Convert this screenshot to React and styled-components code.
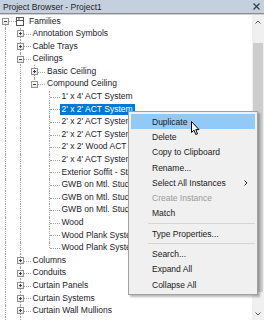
import React from "react";
import styled, { createGlobalStyle } from "styled-components";

const Global = createGlobalStyle`
  html, body { margin: 0; padding: 0; background: #fff; }
  body { font-family: "Liberation Sans", Arial, sans-serif; }
`;

const Window = styled.div`
  position: relative;
  width: 264px;
  height: 320px;
  overflow: hidden;
  display: flex;
  flex-direction: column;
  background: #fff;
  font-family: "Liberation Sans", Arial, sans-serif;
  font-size: 8.5px;
  color: #1c1c1c;
`;

const TitleBar = styled.div`
  height: 13px;
  flex: none;
  display: flex;
  align-items: center;
  justify-content: space-between;
  padding: 0 4px 0 3px;
  background: #c4d0de;
  color: #1e2228;
  border-bottom: 1px solid #8a8a8a;
  box-shadow: 0 1px 0 #d2d2d2;
  margin-bottom: 1px;
`;

const Body = styled.div`
  flex: 1;
  display: flex;
  min-height: 0;
`;

const Tree = styled.div`
  flex: 1;
  overflow: hidden;
  display: flex;
  flex-direction: column;
`;

const Row = styled.div`
  height: 12.6px;
  flex: none;
  display: flex;
  align-items: center;
  white-space: nowrap;
`;

const Filler = styled.div`
  flex: 1;
  display: flex;
`;

const Guide = styled.div`
  width: 14.5px;
  height: 100%;
  flex: none;
  position: relative;
  &::before {
    content: "";
    display: ${(p) => (p.$line ? "block" : "none")};
    position: absolute;
    left: 5px;
    top: 0;
    bottom: 0;
    border-left: 1px dotted #a3a3a3;
  }
`;

const Node = styled.div`
  width: 16px;
  height: 100%;
  flex: none;
  position: relative;
  display: flex;
  align-items: center;
  &::before {
    content: "";
    position: absolute;
    left: 5px;
    top: ${(p) => (p.$first ? "50%" : "0")};
    bottom: ${(p) => (p.$next ? "0" : "50%")};
    border-left: 1px dotted #a3a3a3;
  }
  &::after {
    content: "";
    position: absolute;
    left: 6px;
    right: 0;
    top: 50%;
    border-top: 1px dotted #a3a3a3;
  }
`;

const Toggle = styled.div`
  position: relative;
  z-index: 1;
  margin-left: 2px;
  width: 7px;
  height: 7px;
  box-sizing: border-box;
  border: 1px solid #929292;
  background: linear-gradient(#ffffff, #e6e6e6);
  display: flex;
  align-items: center;
  justify-content: center;
`;

const Sign = styled.div`
  position: relative;
  width: 3px;
  height: 1px;
  background: #404040;
  &::after {
    content: "";
    display: ${(p) => (p.$plus ? "block" : "none")};
    position: absolute;
    left: 1px;
    top: -1px;
    width: 1px;
    height: 3px;
    background: #404040;
  }
`;

const Label = styled.span`
  height: 11.6px;
  line-height: 11.6px;
  padding: 0 2px;
  background: ${(p) => (p.$sel ? "#0078d7" : "transparent")};
  color: ${(p) => (p.$sel ? "#ffffff" : "#1c1c2a")};
`;

const FamIcon = styled.svg`
  flex: none;
  margin-right: 3px;
  position: relative;
  z-index: 1;
`;

const ScrollBar = styled.div`
  width: 12px;
  flex: none;
  display: flex;
  flex-direction: column;
  background: #f0f0f0;
`;

const ScrollBtn = styled.div`
  height: 13px;
  flex: none;
  display: flex;
  align-items: center;
  justify-content: center;
`;

const ScrollTrack = styled.div`
  flex: 1;
  display: flex;
  flex-direction: column;
  padding: 15px 1px 15px 1px;
`;

const Thumb = styled.div`
  flex: 1;
  background: #cdcdcd;
`;

const Menu = styled.div`
  position: absolute;
  left: 128px;
  top: 111px;
  width: 130px;
  box-sizing: border-box;
  padding: 2px;
  background: #f0f0f0;
  border: 1px solid #a0a0a0;
  box-shadow: 2px 2px 2px rgba(0, 0, 0, 0.28);
  display: flex;
  flex-direction: column;
`;

const Item = styled.div`
  height: 15.3px;
  display: flex;
  align-items: center;
  justify-content: space-between;
  padding: 0 7px 0 21px;
  background: ${(p) => (p.$hot ? "#91c9f7" : "transparent")};
  color: ${(p) => (p.$off ? "#9a9a9a" : "#1a1a1a")};
`;

const Sep = styled.div`
  height: 5px;
  display: flex;
  align-items: center;
  padding-left: 17px;
  &::after {
    content: "";
    flex: 1;
    height: 1px;
    background: #d5d5d5;
  }
`;

const Cursor = styled.svg`
  position: absolute;
  left: 191px;
  top: 121px;
`;

const leaves = [
  "1' x 4' ACT System",
  "2' x 2' ACT System",
  "2' x 2' ACT System",
  "2' x 2' ACT System",
  "2' x 2' Wood ACT System",
  "2' x 4' ACT System",
  "Exterior Soffit - Stucco",
  "GWB on Mtl. Stud",
  "GWB on Mtl. Stud",
  "GWB on Mtl. Stud",
  "Wood",
  "Wood Plank System",
  "Wood Plank System",
];

// "more" marks nodes whose following siblings lie below the visible area
const raw = [
  { t: "Families", l: 0, k: "open", icon: true, more: true },
  { t: "Annotation Symbols", l: 1, k: "closed" },
  { t: "Cable Trays", l: 1, k: "closed" },
  { t: "Ceilings", l: 1, k: "open" },
  { t: "Basic Ceiling", l: 2, k: "closed" },
  { t: "Compound Ceiling", l: 2, k: "open" },
  ...leaves.map((t, i) => ({ t, l: 3, k: "leaf", sel: i === 1 })),
  { t: "Columns", l: 1, k: "closed" },
  { t: "Conduits", l: 1, k: "closed" },
  { t: "Curtain Panels", l: 1, k: "closed" },
  { t: "Curtain Systems", l: 1, k: "closed" },
  { t: "Curtain Wall Mullions", l: 1, k: "closed", more: true },
];

function hasNext(i) {
  if (raw[i].more) return true;
  const lv = raw[i].l;
  for (let j = i + 1; j < raw.length; j++) {
    if (raw[j].l === lv) return true;
    if (raw[j].l < lv) return false;
  }
  return false;
}

const rows = raw.map((r, i) => ({ ...r, next: hasNext(i) }));

const withGuides = rows.map((r, i) => {
  const guides = [];
  for (let k = 0; k < r.l; k++) {
    let a = i - 1;
    while (a >= 0 && rows[a].l !== k) a--;
    guides.push(a >= 0 ? rows[a].next : false);
  }
  return { ...r, guides };
});

const menu = [
  { t: "Duplicate", hot: true },
  { t: "Delete" },
  { t: "Copy to Clipboard" },
  { t: "Rename..." },
  { t: "Select All Instances", sub: true },
  { t: "Create Instance", off: true },
  { t: "Match" },
  { sep: true },
  { t: "Type Properties..." },
  { sep: true },
  { t: "Search..." },
  { t: "Expand All" },
  { t: "Collapse All" },
];

export default function App() {
  return (
    <>
      <Global />
      <Window>
        <TitleBar>
          <span>Project Browser - Project1</span>
          <svg width="7" height="7" viewBox="0 0 7 7">
            <path d="M0.5 0.5 L6.5 6.5 M6.5 0.5 L0.5 6.5" stroke="#3a3f46" strokeWidth="1.3" />
          </svg>
        </TitleBar>
        <Body>
          <Tree>
            {withGuides.map((r, i) => (
              <Row key={i}>
                {r.guides.map((g, k) => (
                  <Guide key={k} $line={g} />
                ))}
                <Node $next={r.next} $first={i === 0}>
                  {r.k !== "leaf" && (
                    <Toggle>
                      <Sign $plus={r.k === "closed"} />
                    </Toggle>
                  )}
                </Node>
                {r.icon && (
                  <FamIcon width="8" height="9" viewBox="0 0 8 9">
                    <rect x="0.5" y="0.5" width="7" height="8" fill="#fff" stroke="#555" />
                    <path d="M0.5 3.5 H7.5 M3 0.5 V3.5" stroke="#555" fill="none" />
                  </FamIcon>
                )}
                <Label $sel={r.sel}>{r.t}</Label>
              </Row>
            ))}
            <Filler>
              <Guide $line />
              <Guide $line />
            </Filler>
          </Tree>
          <ScrollBar>
            <ScrollBtn>
              <svg width="6" height="4" viewBox="0 0 6 4">
                <path d="M0.5 3.5 L3 1 L5.5 3.5" stroke="#555" fill="none" />
              </svg>
            </ScrollBtn>
            <ScrollTrack>
              <Thumb />
            </ScrollTrack>
            <ScrollBtn>
              <svg width="6" height="4" viewBox="0 0 6 4">
                <path d="M0.5 0.5 L3 3 L5.5 0.5" stroke="#555" fill="none" />
              </svg>
            </ScrollBtn>
          </ScrollBar>
        </Body>
        <Menu>
          {menu.map((m, i) =>
            m.sep ? (
              <Sep key={i} />
            ) : (
              <Item key={i} $hot={m.hot} $off={m.off}>
                <span>{m.t}</span>
                {m.sub && (
                  <svg width="4" height="6" viewBox="0 0 4 6">
                    <path d="M0.5 0.5 L3 3 L0.5 5.5" stroke="#333" fill="none" />
                  </svg>
                )}
              </Item>
            )
          )}
        </Menu>
        <Cursor width="10" height="15" viewBox="0 0 10 15">
          <path
            d="M0.5 0.5 L0.5 11.5 L3 9.2 L4.8 13.5 L6.5 12.8 L4.8 8.6 L8 8.6 Z"
            fill="#fff"
            stroke="#000"
            strokeWidth="1"
            strokeLinejoin="round"
          />
        </Cursor>
      </Window>
    </>
  );
}
